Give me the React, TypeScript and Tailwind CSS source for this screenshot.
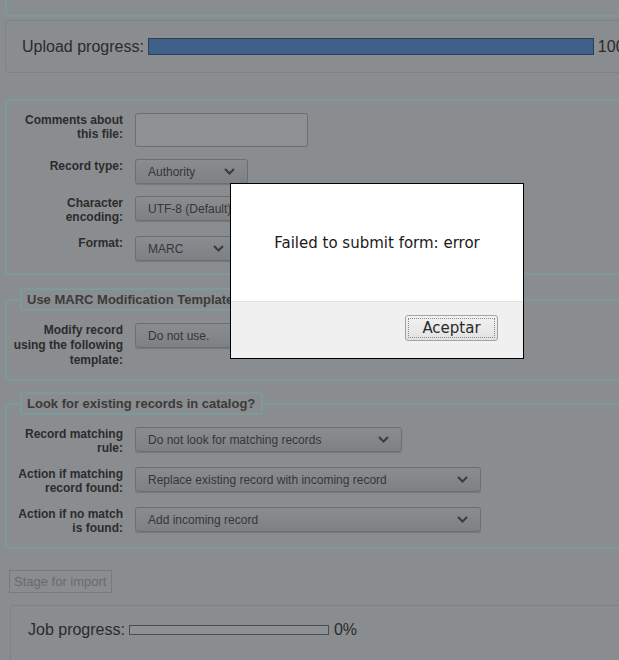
import React from 'react';

function Chevron() {
  return (
    <svg width="11" height="7" viewBox="0 0 11 7" className="shrink-0">
      <path d="M1 1l4.5 4.5L10 1" fill="none" stroke="#3a3b3c" strokeWidth="2" />
    </svg>
  );
}

function Select({ value, width }: { value: string; width: string }) {
  return (
    <div
      className={`${width} h-[25px] flex items-center justify-between pl-[12px] pr-[12px] rounded-[3px] border border-[#6c6f71] bg-gradient-to-b from-[#8a8d8f] to-[#7e8183] shadow-[0_1px_1px_rgba(0,0,0,0.15)] text-[12px] text-[#353637] whitespace-nowrap overflow-hidden`}
    >
      <span>{value}</span>
      <Chevron />
    </div>
  );
}

function Row({ label, children }: { label: React.ReactNode; children: React.ReactNode }) {
  return (
    <div className="flex items-start">
      <div className="w-[116px] text-right font-bold text-[12px] leading-[14px] text-[#2b2c2d] shrink-0">
        {label}
      </div>
      <div className="ml-[12px]">{children}</div>
    </div>
  );
}

function Legend({ children }: { children: React.ReactNode }) {
  return (
    <legend className="ml-[13px] pl-[5px] pr-[6px] h-[23px] flex items-center border-2 border-solid border-[#7e9999] rounded-[3px] bg-[#8a8d8f] font-bold text-[13px] text-[#3a3b3c] whitespace-nowrap">
      {children}
    </legend>
  );
}

export default function App() {
  return (
    <div
      className="relative w-[619px] h-[660px] overflow-hidden bg-[#8a8d8f]"
      style={{ fontFamily: '"Liberation Sans", Arial, sans-serif' }}
    >
      <div className="w-[680px] pl-[5px]">
        {/* tail of the panel above */}
        <div className="h-[17px] border-2 border-solid border-t-0 border-[#7e9999] rounded-b-[5px]" />

        {/* Upload progress */}
        <div className="mt-[3px] h-[53px] border border-solid border-[#7f8285] rounded-[4px] flex items-center pl-[16px]">
          <span className="text-[16px] text-[#2a2b2c]">Upload progress:</span>
          <div className="ml-[4px] w-[446px] h-[17px] bg-[#3f6189] border border-[#2c3f55]" />
          <span className="ml-[4px] text-[16px] text-[#2a2b2c]">100%</span>
        </div>

        {/* File details */}
        <div className="mt-[26px] border-2 border-solid border-[#7e9999] rounded-[4px] pt-[12px] pb-[12px] flex flex-col gap-[12px]">
          <Row
            label={
              <>
                Comments about
                <br />
                this file:
              </>
            }
          >
            <div className="w-[173px] h-[34px] border border-[#6c6f71] rounded-[3px] bg-[#8e9193]" />
          </Row>
          <Row label="Record type:">
            <Select value="Authority" width="w-[113px]" />
          </Row>
          <Row
            label={
              <>
                Character
                <br />
                encoding:
              </>
            }
          >
            <Select value="UTF-8 (Default)" width="w-[150px]" />
          </Row>
          <Row label="Format:">
            <Select value="MARC" width="w-[102px]" />
          </Row>
        </div>

        {/* Modification template */}
        <fieldset className="mt-[13px] border-2 border-solid border-[#7e9999] rounded-[4px] p-0 m-0 pb-[11px] min-w-0">
          <Legend>Use MARC Modification Template</Legend>
          <div className="pt-[12px]">
            <Row
              label={
                <span className="leading-[15px] block">
                  Modify record
                  <br />
                  using the following
                  <br />
                  template:
                </span>
              }
            >
              <Select value="Do not use." width="w-[150px]" />
            </Row>
          </div>
        </fieldset>

        {/* Look for existing records */}
        <fieldset className="mt-[11px] border-2 border-solid border-[#7e9999] rounded-[4px] p-0 m-0 pb-[12px] min-w-0">
          <Legend>Look for existing records in catalog?</Legend>
          <div className="pt-[12px] flex flex-col gap-[12px]">
            <Row
              label={
                <>
                  Record matching
                  <br />
                  rule:
                </>
              }
            >
              <Select value="Do not look for matching records" width="w-[267px]" />
            </Row>
            <Row
              label={
                <>
                  Action if matching
                  <br />
                  record found:
                </>
              }
            >
              <Select value="Replace existing record with incoming record" width="w-[346px]" />
            </Row>
            <Row
              label={
                <>
                  Action if no match
                  <br />
                  is found:
                </>
              }
            >
              <Select value="Add incoming record" width="w-[346px]" />
            </Row>
          </div>
        </fieldset>

        {/* Stage button */}
        <div className="mt-[20px] ml-[4px]">
          <button className="h-[23px] px-[4px] border border-solid border-[#77797b] bg-[#8a8d8f] text-[13px] text-[#686b6d]">
            Stage for import
          </button>
        </div>

        {/* Job progress */}
        <div className="mt-[12px] ml-[5px] h-[60px] border border-solid border-[#7f8285] rounded-[4px] flex items-center pl-[17px] pb-[10px]">
          <span className="text-[16px] text-[#2a2b2c]">Job progress:</span>
          <div className="ml-[4px] w-[200px] h-[10px] border border-[#4a4c4e] bg-[#8e9193]" />
          <span className="ml-[5px] text-[16px] text-[#2a2b2c]">0%</span>
        </div>
      </div>

      {/* Alert dialog */}
      <div
        className="absolute left-[230px] top-[183px] w-[294px] h-[176px] border border-black bg-white flex flex-col"
        style={{ fontFamily: '"DejaVu Sans", sans-serif' }}
      >
        <div className="h-[117px] flex items-center justify-center text-[15px] text-[#1a1a1a] pt-[1px]">
          Failed to submit form: error
        </div>
        <div className="flex-1 border-t border-[#e2e2e2] bg-[#f0f0f0] flex items-start justify-end pt-[13px] pr-[25px]">
          <button className="w-[93px] h-[26px] rounded-[3px] border border-[#a3a3a3] bg-gradient-to-b from-[#f2f2f2] to-[#e2e2e2] p-[2px]">
            <span className="flex h-full w-full items-center justify-center border border-dotted border-[#8a8a8a] text-[15px] text-[#2a2a2a]">
              Aceptar
            </span>
          </button>
        </div>
      </div>
    </div>
  );
}
